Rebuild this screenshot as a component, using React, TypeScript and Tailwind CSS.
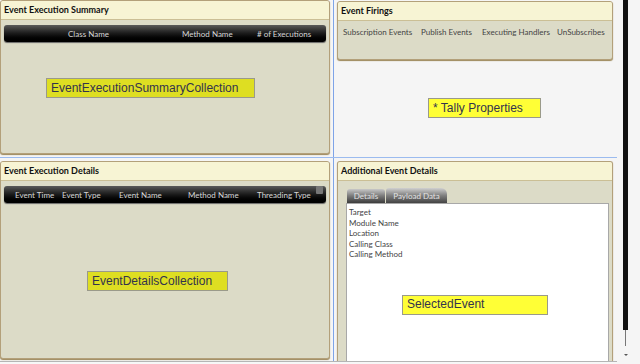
import React from "react";

const ui = { fontFamily: "Lato, 'Open Sans', sans-serif" };
const arial = { fontFamily: "'Liberation Sans', Arial, sans-serif" };

function Panel({
  title,
  className,
  children,
}: {
  title: string;
  className?: string;
  children?: React.ReactNode;
}) {
  return (
    <div
      className={`flex flex-col overflow-hidden rounded-[3px] border border-[#b3a07a] bg-[#dcdbc7] shadow-[0_1px_1px_#9c8758] ${className ?? ""}`}
    >
      <div className="flex h-[19px] shrink-0 items-center border-b border-[#cbbf95] bg-[#f7f4d4] px-[3px] text-[9px] font-bold text-[#111]">
        {title}
      </div>
      {children}
    </div>
  );
}

function GridHeader({ children }: { children: React.ReactNode }) {
  return (
    <div className="relative mx-[3px] mt-[5px] flex h-[17px] items-center whitespace-nowrap rounded-[3px] bg-gradient-to-b from-[#5a5a5a] via-[#1a1a1a] to-[#000] text-[8px] text-[#d6d6d6] shadow-[0_1px_1px_#666]">
      {children}
    </div>
  );
}

function Tag({ text, bright, className }: { text: string; bright?: boolean; className?: string }) {
  return (
    <div
      style={arial}
      className={`flex h-[20px] items-center whitespace-nowrap border border-[#9a9a8a] px-[4px] text-[12px] text-[#33334d] ${bright ? "bg-[#ffff36]" : "bg-[#dede22]"} ${className ?? ""}`}
    >
      {text}
    </div>
  );
}

export default function App() {
  return (
    <div style={ui} className="flex h-[364px] w-[640px] overflow-hidden bg-[#f5f5f5]">
      <div className="flex w-[617px] flex-col">
        {/* top row */}
        <div className="flex h-[158px] shrink-0 border-b border-[#9bbbef]">
          <div className="flex w-[334px] shrink-0 border-r border-[#7ea4e8] pb-[3px] pr-[3px]">
            <Panel title="Event Execution Summary" className="w-full">
              <GridHeader>
                <span className="absolute left-[64px]">Class Name</span>
                <span className="absolute left-[178px]">Method Name</span>
                <span className="absolute left-[253px]">
                  # of Executions
                </span>
              </GridHeader>
              <div className="pl-[45px] pt-[36px]">
                <Tag text="EventExecutionSummaryCollection" className="w-[209px]" />
              </div>
            </Panel>
          </div>
          <div className="flex flex-1 flex-col pl-[3px] pr-[4px] pt-px">
            <Panel title="Event Firings" className="h-[59px] shrink-0">
              <div className="flex whitespace-nowrap px-[5px] pt-[5px] text-[8px] text-[#444]">
                <span className="w-[78px]">Subscription Events</span>
                <span className="w-[61px]">Publish Events</span>
                <span className="w-[75px]">Executing Handlers</span>
                <span>UnSubscribes</span>
              </div>
            </Panel>
            <div className="pl-[91px] pt-[38px]">
              <Tag text="* Tally Properties" bright className="w-[113px]" />
            </div>
          </div>
        </div>
        {/* bottom row */}
        <div className="flex flex-1">
          <div className="flex w-[334px] shrink-0 border-r border-[#7ea4e8] pr-[3px] pt-[3px]">
            <Panel title="Event Execution Details" className="mb-[2px] w-full">
              <GridHeader>
                <span className="absolute left-[11px]">Event Time</span>
                <span className="absolute left-[58px]">Event Type</span>
                <span className="absolute left-[115px]">Event Name</span>
                <span className="absolute left-[184px]">Method Name</span>
                <span className="absolute left-[253px]">Threading Type</span>
                <span className="absolute right-[3px] top-0 h-[8px] w-[7px] rounded-[1px] bg-[#777]" />
              </GridHeader>
              <div className="pl-[86px] pt-[68px]">
                <Tag text="EventDetailsCollection" className="w-[141px]" />
              </div>
            </Panel>
          </div>
          <div className="flex flex-1 pl-[3px] pr-[4px] pt-[3px]">
            <Panel title="Additional Event Details" className="w-full rounded-b-none border-b-0">
              <div className="flex flex-1 flex-col px-[8px] pr-[3px] pt-[7px]">
                <div className="flex h-[15px] items-end gap-px pl-px text-[8px] text-[#e2e2e2]">
                  <div className="flex h-[14px] w-[38px] items-end justify-center rounded-t-[3px] bg-gradient-to-b from-[#c8c8c8] via-[#7a7a7a] to-[#3c3c3c] pb-[1px]">
                    Details
                  </div>
                  <div className="flex h-[15px] w-[61px] items-center justify-center rounded-t-[3px] rounded-tr-[6px] bg-gradient-to-b from-[#d0d0d0] via-[#808080] to-[#444]">
                    Payload Data
                  </div>
                </div>
                <div className="flex flex-1 flex-col border border-b-0 border-[#a8a8a8] bg-white px-[2px] pt-[3px] text-[8px] leading-[10.5px] text-[#444]">
                  <span>Target</span>
                  <span>Module Name</span>
                  <span>Location</span>
                  <span>Calling Class</span>
                  <span>Calling Method</span>
                  <div className="pl-[53px] pt-[35px]">
                    <Tag text="SelectedEvent" bright className="w-[146px]" />
                  </div>
                </div>
              </div>
            </Panel>
          </div>
        </div>
        <div className="h-[3px] shrink-0 border-t border-[#b5b5b5] bg-[#f7f7f7]" />
      </div>
      {/* scrollbar */}
      <div className="flex flex-1 flex-col items-start pl-[6px]">
        <div className="h-[330px] w-[5px] bg-[#111]" />
        <div className="ml-[2px] h-[16px] w-px bg-[#777]" />
        <div className="ml-[1px] mt-[8px] h-0 w-0 border-x-[2px] border-t-[2px] border-x-transparent border-t-[#555]" />
      </div>
    </div>
  );
}
